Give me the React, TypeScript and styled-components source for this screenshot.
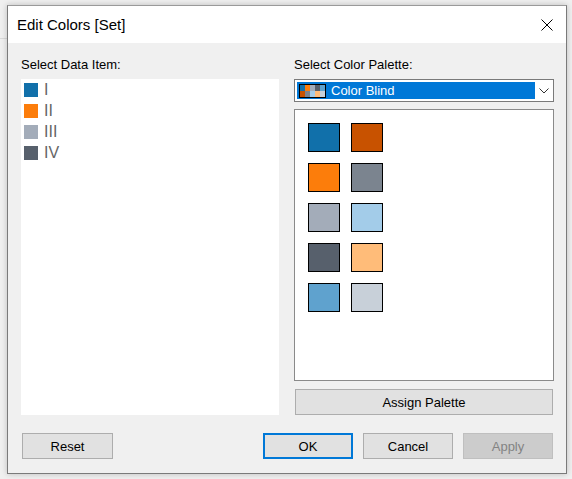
import React from "react";
import styled, { createGlobalStyle } from "styled-components";

const GlobalStyle = createGlobalStyle`
  html, body {
    margin: 0;
    padding: 0;
  }
  body {
    background: #f0f0f0 linear-gradient(#dadada, #dadada) no-repeat 0 38px / 7px 1px;
    font-family: "Liberation Sans", Arial, sans-serif;
    width: 572px;
    height: 479px;
    overflow: hidden;
  }
  #root {
    padding: 5px 0 0 7px;
  }
`;

const Window = styled.div`
  width: 560px;
  height: 469px;
  box-sizing: border-box;
  border: 1px solid #7a7a7a;
  border-top-color: #9a9a9a;
  box-shadow: 0 0 6px rgba(0, 0, 0, 0.22);
  display: flex;
  flex-direction: column;
  background: #f0f0f0;
`;

const TitleBar = styled.div`
  height: 37px;
  background: #fff;
  display: flex;
  align-items: center;
  justify-content: space-between;
  padding: 0 12px 0 9px;
  flex-shrink: 0;
`;

const Title = styled.span`
  font-size: 15px;
  color: #000;
  line-height: 18px;
  padding-top: 1px;
`;

const CloseButton = styled.button`
  border: none;
  background: transparent;
  padding: 0;
  width: 14px;
  height: 14px;
  display: flex;
  align-items: center;
  justify-content: center;
`;

const Content = styled.div`
  flex: 1;
  display: flex;
  flex-direction: column;
  padding: 14px 11px 13px 13px;
`;

const Columns = styled.div`
  display: grid;
  grid-template-columns: 258px 260px;
  column-gap: 15px;
  height: 358px;
`;

const Column = styled.div`
  display: flex;
  flex-direction: column;
  min-height: 0;
`;

const Label = styled.div`
  font-size: 13px;
  line-height: 16px;
  height: 16px;
  color: #000;
  margin-bottom: 6px;
`;

const DataList = styled.div`
  flex: 1;
  background: #fff;
  padding: 0 3px;
  display: flex;
  flex-direction: column;
`;

const DataRow = styled.div`
  display: flex;
  align-items: center;
  height: 21px;
  gap: 6px;
  flex-shrink: 0;
`;

const DataSwatch = styled.span<{ $color: string }>`
  width: 14px;
  height: 14px;
  background: ${(p) => p.$color};
  flex-shrink: 0;
`;

const DataText = styled.span`
  font-size: 16px;
  color: #666;
  line-height: 16px;
`;

const Dropdown = styled.div`
  height: 23px;
  box-sizing: border-box;
  border: 1px solid #7a7a7a;
  background: #fff;
  display: flex;
  align-items: stretch;
  padding: 2px 0 2px 2px;
`;

const Selected = styled.div`
  flex: 1;
  background: #0078d7;
  display: flex;
  align-items: center;
  padding-left: 2px;
  gap: 5px;
`;

const PaletteIcon = styled.div`
  width: 27px;
  height: 14px;
  box-sizing: border-box;
  border: 1px solid #000;
  display: grid;
  grid-template-columns: repeat(5, 1fr);
  grid-template-rows: repeat(2, 1fr);
`;

const IconCell = styled.span<{ $color: string }>`
  background: ${(p) => p.$color};
`;

const SelectedText = styled.span`
  color: #fff;
  font-size: 13px;
  line-height: 16px;
`;

const Chevron = styled.div`
  width: 18px;
  display: flex;
  align-items: center;
  justify-content: center;
`;

const PaletteBox = styled.div`
  flex: 1;
  margin-top: 7px;
  box-sizing: border-box;
  border: 1px solid #8a8a8a;
  background: #fff;
  padding: 13px;
  display: grid;
  grid-template-columns: repeat(2, 32px);
  grid-auto-flow: column;
  grid-template-rows: repeat(5, 29px);
  column-gap: 11px;
  row-gap: 11px;
  align-content: start;
`;

const PaletteSwatch = styled.span<{ $color: string }>`
  box-sizing: border-box;
  border: 1px solid #000;
  background: ${(p) => p.$color};
`;

const Button = styled.button<{ $width?: number; $primary?: boolean; $disabled?: boolean }>`
  height: 26px;
  width: ${(p) => (p.$width ? `${p.$width}px` : "auto")};
  box-sizing: border-box;
  font-family: "Liberation Sans", Arial, sans-serif;
  font-size: 13px;
  color: ${(p) => (p.$disabled ? "#838383" : "#000")};
  background: ${(p) => (p.$disabled ? "#cccccc" : "#e1e1e1")};
  border: ${(p) =>
    p.$primary ? "2px solid #0078d7" : p.$disabled ? "1px solid #bfbfbf" : "1px solid #adadad"};
  padding: 0;
  margin: 0;
  display: flex;
  align-items: center;
  justify-content: center;
`;

const AssignButton = styled(Button)`
  margin-top: 8px;
  margin-left: 1px;
  width: 258px;
`;

const ButtonRow = styled.div`
  margin-top: 18px;
  display: flex;
  align-items: center;
  padding: 0 2px 0 1px;
`;

const Spacer = styled.div`
  flex: 1;
`;

const ButtonGroup = styled.div`
  display: flex;
  gap: 10px;
`;

const dataItems = [
  { label: "I", color: "#1170aa" },
  { label: "II", color: "#fc7d0b" },
  { label: "III", color: "#a3acb9" },
  { label: "IV", color: "#57606c" },
];

const palette = [
  "#1170aa",
  "#fc7d0b",
  "#a3acb9",
  "#57606c",
  "#5fa2ce",
  "#c85200",
  "#7b848f",
  "#a3cce9",
  "#ffbc79",
  "#c8d0d9",
];

export default function App() {
  return (
    <>
      <GlobalStyle />
      <Window>
        <TitleBar>
          <Title>Edit Colors [Set]</Title>
          <CloseButton aria-label="Close">
            <svg width="12" height="12" viewBox="0 0 12 12">
              <path d="M0.5 0.5 L11.5 11.5 M11.5 0.5 L0.5 11.5" stroke="#000" strokeWidth="1" fill="none" />
            </svg>
          </CloseButton>
        </TitleBar>
        <Content>
          <Columns>
            <Column>
              <Label>Select Data Item:</Label>
              <DataList>
                {dataItems.map((d) => (
                  <DataRow key={d.label}>
                    <DataSwatch $color={d.color} />
                    <DataText>{d.label}</DataText>
                  </DataRow>
                ))}
              </DataList>
            </Column>
            <Column>
              <Label>Select Color Palette:</Label>
              <Dropdown>
                <Selected>
                  <PaletteIcon>
                    {palette.map((c, i) => (
                      <IconCell key={i} $color={c} />
                    ))}
                  </PaletteIcon>
                  <SelectedText>Color Blind</SelectedText>
                </Selected>
                <Chevron>
                  <svg width="10" height="6" viewBox="0 0 10 6">
                    <path d="M0.5 0.5 L5 5 L9.5 0.5" stroke="#333" strokeWidth="1" fill="none" />
                  </svg>
                </Chevron>
              </Dropdown>
              <PaletteBox>
                {palette.map((c, i) => (
                  <PaletteSwatch key={i} $color={c} />
                ))}
              </PaletteBox>
              <AssignButton>Assign Palette</AssignButton>
            </Column>
          </Columns>
          <ButtonRow>
            <Button $width={91}>Reset</Button>
            <Spacer />
            <ButtonGroup>
              <Button $width={90} $primary>
                OK
              </Button>
              <Button $width={90}>Cancel</Button>
              <Button $width={90} $disabled>
                Apply
              </Button>
            </ButtonGroup>
          </ButtonRow>
        </Content>
      </Window>
    </>
  );
}
